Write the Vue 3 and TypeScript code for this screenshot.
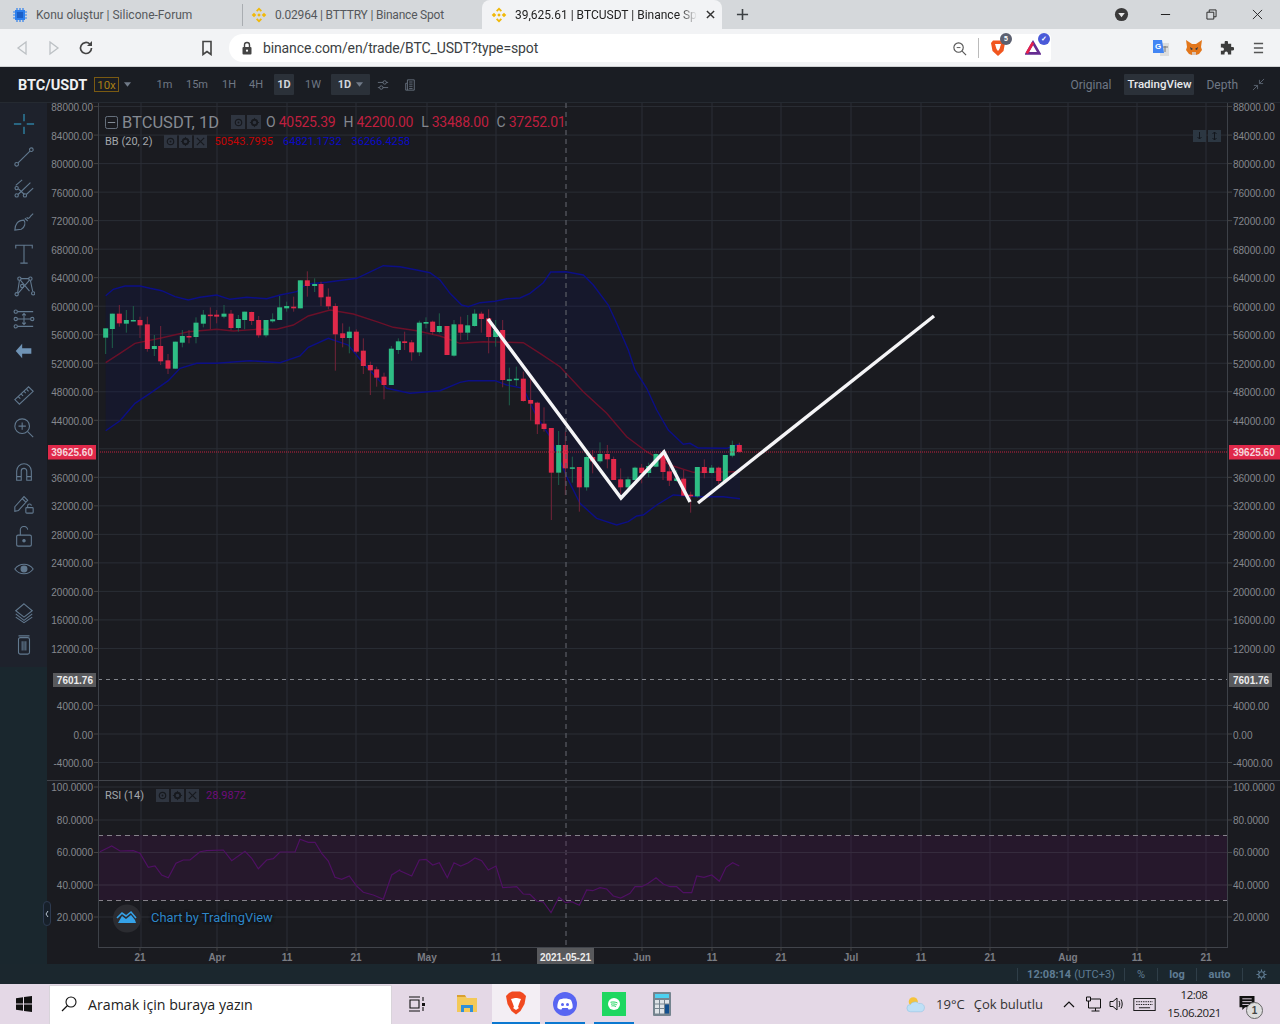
<script setup lang="ts">
type C = [number, string, number, number, number, number]
const a: C[] = [
[17,'g',205,233,205,282],[37,'g',161,207,161,264],[58,'r',161,190,135,200],[79,'g',180,191,150,218],[100,'g',180,184,138,184],[120,'r',180,196,170,234],[142,'r',193,267,170,275],[163,'g',258,267,225,288],[182,'r',258,304,198,315],[204,'r',301,326,282,342],[226,'g',245,326,245,326],[247,'g',228,248,210,262],[267,'r',228,231,210,250],[288,'g',188,231,172,250],[310,'g',164,191,150,202],[331,'r',164,168,142,208],[350,'r',164,170,150,190],[372,'g',161,170,135,175],[393,'r',161,204,150,210],[415,'g',177,204,165,215],[434,'g',155,180,155,208],[455,'r',156,183,155,195],[476,'r',180,226,168,233],[498,'g',180,226,180,232],[518,'g',178,184,160,188],[539,'g',142,180,108,180],[560,'g',138,145,125,155],[581,'r',140,145,110,155],[601,'g',61,145,61,145],[622,'r',61,78,34,110],[644,'g',72,78,55,96],[663,'r',72,112,65,138],[685,'r',110,139,85,148],[706,'r',138,223,130,332],[728,'r',220,234,190,262],[748,'g',215,234,200,280],[769,'r',215,275,208,280],[790,'r',272,318,235,342],[811,'r',315,331,305,405],[830,'r',328,353,320,380],[852,'r',350,375,338,418],[874,'g',266,375,258,375],[895,'g',244,270,235,282],[914,'r',244,249,215,270],[935,'r',247,277,240,302],[958,'g',188,277,182,288],[978,'g',186,191,172,205],[998,'r',185,216,182,225],[1018,'g',198,216,160,220]]
const b: C[] = [
[21,'r',198,285,198,285],[42,'g',193,287,180,290],[62,'r',193,218,170,240],[83,'g',196,218,165,240],[104,'g',161,198,148,200],[124,'r',161,177,155,218],[146,'r',175,231,148,280],[167,'g',210,231,180,260],[188,'r',210,360,180,382],[208,'g',358,362,323,436],[229,'g',356,360,320,378],[250,'r',356,423,335,425],[272,'r',420,431,355,482],[292,'r',428,493,425,522],[312,'r',491,507,442,515],[334,'r',504,638,504,780],[356,'g',555,638,513,675],[376,'r',555,625,515,705],[397,'g',622,625,590,668],[418,'r',621,682,621,755],[440,'g',591,682,570,692],[458,'r',591,604,570,640],[480,'g',582,604,547,610],[502,'r',582,598,555,625],[521,'r',597,660,590,660],[542,'r',658,682,625,702],[564,'g',658,682,650,695],[585,'g',623,660,620,660],[605,'r',623,639,612,670],[626,'g',618,639,608,652],[648,'g',582,620,580,622],[669,'r',582,636,570,660],[688,'r',634,662,605,678],[710,'g',655,663,630,665],[731,'r',656,707,630,708],[752,'r',704,709,695,758],[772,'g',621,709,621,712],[793,'r',621,639,598,655],[815,'g',623,639,615,640],[836,'r',623,663,620,672],[856,'g',585,663,585,665],[877,'g',555,587,542,592],[898,'r',555,576,548,578]]
const conv = (list: C[], ox: number) => list.map(c => ({
  x: ox + c[0] / 3, up: c[1] === 'g', top: 260 + c[2] / 3, h: Math.max(1.5, (c[3] - c[2]) / 3), wt: 260 + c[4] / 3, wb: 260 + c[5] / 3 }))
const candles = [...conv(a, 100), ...conv(b, 440)]

const pts = (z1: number[][], z2: number[][]) => [
  ...z1.map(p => [100 + p[0] / 3, 260 + p[1] / 3]),
  ...z2.map(p => [440 + p[0] / 3, 260 + p[1] / 3])]
const ps = (l: number[][]) => l.map(p => p[0].toFixed(1) + ',' + p[1].toFixed(1)).join(' ')
const upper = pts([[17,107],[40,88],[75,78],[120,78],[150,85],[185,92],[225,110],[265,120],[300,112],[350,105],[390,118],[440,112],[500,116],[540,105],[590,95],[620,72],[680,67],[770,55],[850,17],[900,20],[950,30],[990,38],[1020,60]],
  [[30,100],[65,135],[85,140],[120,128],[165,124],[200,116],[240,114],[270,100],[310,68],[332,36],[378,35],[430,45],[460,75],[505,135],[530,190],[565,270],[585,330],[620,385],[650,450],[685,510],[730,553],[750,550],[775,564],[860,565],[900,552]])
const lower = pts([[17,512],[60,482],[105,430],[150,400],[205,362],[240,325],[290,310],[350,310],[450,302],[540,308],[600,288],[625,262],[685,235],[745,255],[790,310],[860,385],[930,400],[1020,392]],
  [[60,367],[85,362],[165,362],[200,375],[250,385],[290,470],[330,530],[380,650],[420,730],[470,775],[530,795],[565,785],[590,768],[610,765],[650,735],[700,705],[780,710],[850,710],[900,716]])
const middle = pts([[17,308],[60,280],[105,250],[180,235],[265,215],[350,208],[400,213],[470,208],[530,208],[580,195],[625,168],[690,150],[760,162],[830,185],[880,202],[950,212],[1020,228]],
  [[60,250],[130,245],[250,248],[300,280],[360,320],[430,395],[500,460],[560,530],[620,575],[690,615],[760,637],[900,635]])
const upperS = ps(upper), lowerS = ps(lower), middleS = ps(middle)
const band = ps([...upper, ...[...lower].reverse()])

const rsi = ps([
  ...[[300,215],[335,198],[360,213],[400,212],[420,220],[445,262],[465,258],[485,285],[505,293],[528,250],[550,240],[570,240],[600,215],[620,212],[670,210],[695,242],[735,214],[755,235],[775,266],[800,240],[820,236],[840,216],[885,216],[900,178],[925,187],[945,187],[965,220],[985,243],[1005,292],[1025,298],[1048,288],[1070,318],[1090,337],[1120,345],[1150,358],[1175,285],[1199,270]].map(p => [p[0] / 3, 780 + p[1] / 3]),
  ...[[0,92],[35,108],[58,60],[78,58],[98,75],[118,68],[142,113],[162,68],[182,78],[205,68],[225,54],[245,62],[265,90],[288,78],[308,143],[350,140],[370,162],[390,163],[410,183],[430,186],[453,218],[477,172],[497,188],[515,185],[538,196],[560,150],[578,152],[600,143],[620,147],[640,168],[662,174],[690,160],[705,140],[725,140],[745,130],[768,113],[790,132],[810,140],[830,140],[850,158],[875,158],[890,108],[912,112],[935,105],[958,124],[978,82],[998,68],[1018,78]].map(p => [400 + p[0] / 3, 840 + p[1] / 3])])

const priceY = (p: number) => 734 - p * 0.00713
const grid: number[] = []
const prices: { y: number; ty: number; t: string }[] = []
for (let p = 88000; p >= -4000; p -= 4000) {
  if (p === 8000) continue
  grid.push(priceY(p))
  if (p !== 40000) prices.push({ y: priceY(p), ty: priceY(p) + 4.5, t: p.toFixed(2) })
}
const rsiTicks = [[100, 787], [80, 820], [60, 852.5], [40, 885], [20, 917]].map(r => ({ y: r[1], ty: r[1] + 3.5, t: r[0].toFixed(4) }))
const vlines = [141, 217, 287, 356, 427, 496, 642, 712, 781, 851, 921, 990, 1068, 1137, 1206]
const times = [
  { x: 140, t: '21' }, { x: 217, t: 'Apr' }, { x: 287, t: '11' }, { x: 356, t: '21' }, { x: 427, t: 'May' }, { x: 496, t: '11' },
  { x: 642, t: 'Jun' }, { x: 712, t: '11' }, { x: 781, t: '21' }, { x: 851, t: 'Jul' }, { x: 921, t: '11' }, { x: 990, t: '21' },
  { x: 1068, t: 'Aug' }, { x: 1137, t: '11' }, { x: 1206, t: '21' }]
const frames = ['1m', '15m', '1H', '4H', '1D', '1W']
</script>

<template>
  <div class="root">
    <!-- tab strip -->
    <div class="tabs">
      <div class="tab t1">
        <svg class="fav" viewBox="0 0 16 16"><path fill="#2f80ed" d="M3 3h10v10H3z"/><path stroke="#2f80ed" stroke-width="1.2" d="M5 1v14M8 1v14M11 1v14M1 5h14M1 8h14M1 11h14"/><rect x="5" y="5" width="6" height="6" fill="#1a5fc8"/></svg>
        <span>Konu oluştur | Silicone-Forum</span>
      </div>
      <div class="tab t2">
        <svg class="fav" viewBox="0 0 16 16"><path fill="#f0b90b" d="M8 .5l3 3-1.300 1.300L8 3.100 6.300 4.800 5 3.500zM3 5.700L5.300 8 3 10.300.7 8zM13 5.700L15.300 8 13 10.300 10.700 8zM8 12.900l1.700-1.700 1.300 1.300-3 3-3-3 1.300-1.300zM8 6.200L9.800 8 8 9.800 6.200 8z"/></svg>
        <span class="t2-txt">0.02964 | BTTTRY | Binance Spot</span>
      </div>
      <div class="tab t3">
        <svg class="fav" viewBox="0 0 16 16"><path fill="#f0b90b" d="M8 .5l3 3-1.300 1.300L8 3.100 6.300 4.800 5 3.500zM3 5.700L5.300 8 3 10.300.7 8zM13 5.700L15.300 8 13 10.300 10.700 8zM8 12.900l1.700-1.700 1.300 1.300-3 3-3-3 1.300-1.300zM8 6.200L9.800 8 8 9.800 6.200 8z"/></svg>
        <span class="t3-txt">39,625.61 | BTCUSDT | Binance Spot</span>
        <svg class="x" viewBox="0 0 10 10"><path d="M1 1l8 8M9 1l-8 8" stroke="#333" stroke-width="1.6"/></svg>
      </div>
      <svg class="plus" viewBox="0 0 14 14"><path d="M7 1v12M1 7h12" stroke="#3c4043" stroke-width="1.7"/></svg>
      <div class="grow"></div>
      <svg class="ctl drop" viewBox="0 0 16 16"><circle cx="8" cy="8" r="7" fill="#3a3a3a"/><path d="M4.500 6.500h7L8 11z" fill="#e8e8e8"/></svg>
      <svg class="ctl mn" viewBox="0 0 12 12"><path d="M1 6h10" stroke="#222" stroke-width="1.1"/></svg>
      <svg class="ctl mx" viewBox="0 0 12 12"><path d="M1 3.500h7.500V11H1zM3.500 3.500V1H11v7.500H8.500" fill="none" stroke="#222"/></svg>
      <svg class="ctl cl" viewBox="0 0 12 12"><path d="M1 1l10 10M11 1L1 11" stroke="#222" stroke-width="1"/></svg>
    </div>
    <!-- toolbar -->
    <div class="bar">
      <svg class="nav nb" viewBox="0 0 12 16"><path d="M10 2L2 8l8 6z" fill="none" stroke="#bcc0c4" stroke-width="1.3"/></svg>
      <svg class="nav nf" viewBox="0 0 12 16"><path d="M2 2l8 6-8 6z" fill="none" stroke="#bcc0c4" stroke-width="1.3"/></svg>
      <svg class="nav nr" viewBox="0 0 16 16"><path d="M13.500 8A5.500 5.500 0 1 1 11.800 4" fill="none" stroke="#444" stroke-width="1.7"/><path d="M14 1v5H9z" fill="#444"/></svg>
      <svg class="nav nbm" viewBox="0 0 12 16"><path d="M2 1.500h8v13l-4-3-4 3z" fill="none" stroke="#444" stroke-width="1.6"/></svg>
      <div class="omni">
        <svg class="lock" viewBox="0 0 12 14"><path d="M3.500 6V4a2.500 2.500 0 0 1 5 0v2" fill="none" stroke="#444" stroke-width="1.4"/><rect x="1.500" y="6" width="9" height="7.500" rx="1" fill="#444"/><circle cx="6" cy="9.700" r="1.100" fill="#fff"/></svg>
        <span class="url">binance.com/en/trade/BTC_USDT?type=spot</span>
        <div class="grow"></div>
        <svg class="zoomi" viewBox="0 0 16 16"><circle cx="7" cy="7" r="5" fill="none" stroke="#555" stroke-width="1.2"/><path d="M5 7h4" stroke="#555"/><path d="M10.800 10.800L15 15" stroke="#555" stroke-width="1.2"/></svg>
        <i class="sep"></i>
        <div class="ext e-brave">
          <svg viewBox="0 0 16 18"><path fill="#f1561f" d="M3 1.500h10l2 2.500-1.500 8L8 17 2.500 12 1 4z"/><path fill="#fff" d="M5 5h6l-1.500 5L8 12 6.500 10z"/></svg>
          <b class="bd b-s">5</b>
        </div>
        <div class="ext e-bat">
          <svg viewBox="0 0 18 16"><path d="M9 2L2 14h14z" fill="none" stroke="#662d91" stroke-width="3"/><path d="M9 2L2 14" stroke="#e8204a" stroke-width="3"/></svg>
          <b class="bd b-c">✓</b>
        </div>
      </div>
      <svg class="nav eg" viewBox="0 0 18 18"><path d="M8 4h9v13H8z" fill="#ddd"/><path d="M1 1h9l2 13H1z" fill="#4285f4"/><text x="3" y="10" class="gt">G</text><path d="M11 8h5M13 7v6" stroke="#777"/></svg>
      <svg class="nav ef" viewBox="0 0 18 18"><path d="M1 1l6 4h4l6-4-1 7 1 3-3 4-3 1H7l-3-1-3-4 1-3z" fill="#e2761b"/><path d="M5 8l3 2-2 1zM13 8l-3 2 2 1z" fill="#233447"/><path d="M7 13h4v3H7z" fill="#d7c1b3"/></svg>
      <svg class="nav ep" viewBox="0 0 16 16"><path fill="#3c3c3c" d="M6 1.500a1.800 1.800 0 0 1 3.600 0V3H13v3.400h1.500a1.800 1.800 0 0 1 0 3.600H13v4.500H9.500V13a1.800 1.800 0 0 0-3.600 0v1.500H2v-4h1.500a1.800 1.800 0 0 0 0-3.600H2V3h4z"/></svg>
      <svg class="nav em" viewBox="0 0 12 14"><path d="M1 2h10M1 7h10M1 12h10" stroke="#555" stroke-width="1.6"/></svg>
    </div>
    <!-- binance header -->
    <header class="hd">
      <strong class="pair">BTC/USDT</strong>
      <span class="lev">10x</span>
      <svg class="caret cg" viewBox="0 0 8 5"><path d="M0 0h8L4 5z"/></svg>
      <div class="frames">
        <span v-for="f in frames" :key="f" class="fr" :class="{ on: f === '1D' }">{{ f }}</span>
        <span class="fr sel">1D <svg class="caret" viewBox="0 0 8 5"><path d="M0 0h8L4 5z"/></svg></span>
      </div>
      <svg class="hi h1" viewBox="0 0 14 12"><path d="M1 3h12M1 9h12" stroke="#6c7684"/><circle cx="9" cy="3" r="2" fill="#1a1d23" stroke="#6c7684"/><circle cx="5" cy="9" r="2" fill="#1a1d23" stroke="#6c7684"/></svg>
      <svg class="hi h2" viewBox="0 0 12 14"><path d="M3 1h8v12H1V5h2zM3 5v8M5 3.500h4M5 6h4M5 8.500h4M5 11h4" fill="none" stroke="#6c7684"/></svg>
      <div class="grow"></div>
      <span class="view v1">Original</span>
      <span class="view von">TradingView</span>
      <span class="view v3">Depth</span>
      <svg class="hi h3" viewBox="0 0 14 14"><path d="M1 13l5-5M2 8h4v4M13 1L8 6M12 6H8V2" fill="none" stroke="#5c6672"/></svg>
    </header>
    <!-- main -->
    <div class="main">
      <aside class="side">
        <div class="tools">
          <div class="tool"><svg viewBox="0 0 24 24"><path d="M1 12h8M15 12h8M12 1v8M12 15v8" stroke="#2e7d9e" stroke-width="1.6"/></svg></div>
          <div class="tool"><svg viewBox="0 0 24 24"><circle cx="4" cy="20" r="2"/><circle cx="20" cy="4" r="2"/><path d="M5.500 18.500l13-13"/></svg></div>
          <div class="tool"><svg viewBox="0 0 24 24"><circle cx="4" cy="19" r="1.800"/><circle cx="13" cy="19" r="1.800"/><circle cx="4" cy="11" r="1.800"/><path d="M5.500 18L19 5M3 8l7-6M14.500 18L22 11M6 12l6.500 6"/></svg></div>
          <div class="tool"><svg viewBox="0 0 24 24"><path d="M2 22c0-6 3-11 10-11 2 3 1 8-3 10zM13 9l3 3M15 8c1 2 3 1 4-1l3-3"/></svg></div>
          <div class="tool"><svg viewBox="0 0 24 24"><path d="M3 6V2.500h18V6M12 2.500V22M8 22h8"/></svg></div>
          <div class="tool"><svg viewBox="0 0 24 24"><circle cx="4" cy="21" r="1.800"/><circle cx="7" cy="4" r="1.800"/><circle cx="19" cy="4" r="1.800"/><circle cx="22" cy="20" r="1.800"/><circle cx="10" cy="12" r="1.800"/><path d="M5 19.500L7 6M5.500 20L18 5.500M8 5.500l10 12M19 6l2.500 12M8.500 4h9"/></svg></div>
          <div class="tool"><svg viewBox="0 0 24 24"><circle cx="3" cy="4" r="1.800"/><circle cx="3" cy="12" r="1.800"/><circle cx="21" cy="12" r="1.800"/><circle cx="3" cy="20" r="1.800"/><path d="M5 4h17M5 20h17M5 12h14M12 6v12M10 8l2-2 2 2M10 16l2 2 2-2"/></svg></div>
          <div class="tool"><svg viewBox="0 0 24 24"><path d="M10 4l-7 8 7 8v-5h10V9H10z" fill="#6f93b5" stroke="none"/></svg></div>
          <div class="tool g2"><svg viewBox="0 0 24 24"><path d="M2 17L17 3l5 5L7 22zM6 14l2 2M9 11l2 2M12 8l2 2M15 6l2 2"/></svg></div>
          <div class="tool"><svg viewBox="0 0 24 24"><circle cx="10" cy="10" r="8"/><path d="M10 6v8M6 10h8M16 16l6 6"/></svg></div>
          <div class="tool g2"><svg viewBox="0 0 24 24"><path d="M4 21V11a8 8 0 0 1 16 0v10h-5V11a3 3 0 0 0-6 0v10zM4 17h5M15 17h5"/></svg></div>
          <div class="tool"><svg viewBox="0 0 24 24"><path d="M2 15L12 4l4 4L6 19l-4 1zM10 6l4 4"/><rect x="14" y="16" width="8" height="6" rx="1"/><path d="M16 16v-2a2 2 0 0 1 4 0"/></svg></div>
          <div class="tool"><svg viewBox="0 0 24 24"><rect x="4" y="10" width="16" height="12" rx="1.500"/><path d="M8 10V5a4 4 0 0 1 8-1"/><circle cx="12" cy="16" r="1.300" fill="#62798f"/></svg></div>
          <div class="tool"><svg viewBox="0 0 24 24"><path d="M2 12c5-7 15-7 20 0-5 7-15 7-20 0z"/><circle cx="12" cy="12" r="3.200" fill="#62798f"/></svg></div>
          <div class="tool g3"><svg viewBox="0 0 24 24"><path d="M12 2l9 7.500-9 7-9-7zM3 13l9 7 9-7M3 16.500l9 6 9-6"/></svg></div>
          <div class="tool"><svg viewBox="0 0 24 24"><rect x="6" y="4" width="12" height="18" rx="2"/><path d="M6 2h12M10 8v10M12 8v10M14 8v10"/></svg></div>
        </div>
        <div class="handle"><svg viewBox="0 0 6 10"><path d="M4 2L2 5l2 3" fill="none" stroke="#b8c4d0"/></svg></div>
      </aside>
      <div class="chart">
        <svg class="plot" viewBox="47 103 1233 861" width="1233" height="861">
          <rect x="47" y="103" width="1233" height="861" fill="#1a1b20"/>
          <!-- grid -->
          <line v-for="v in vlines" :key="'v'+v" :x1="v" :x2="v" y1="103" y2="947" stroke="#2a2e37"/>
          <line v-for="g in grid" :key="'h'+g" x1="98" x2="1227" :y1="g" :y2="g" stroke="#2a2e35"/>
          <line v-for="r in rsiTicks" :key="'r'+r.t" x1="98" x2="1227" :y1="r.y" :y2="r.y" stroke="#2a2e35"/>
          <!-- bollinger -->
          <polygon :points="band" fill="#0a1060" fill-opacity=".2"/>
          <polyline :points="upperS" fill="none" stroke="#0c0f86" stroke-width="1.400"/>
          <polyline :points="lowerS" fill="none" stroke="#0c0f86" stroke-width="1.400"/>
          <polyline :points="middleS" fill="none" stroke="#6b1029" stroke-width="1.400"/>
          <!-- candles -->
          <g v-for="(c, i) in candles" :key="i">
            <line :x1="c.x" :x2="c.x" :y1="c.wt" :y2="c.wb" :stroke="c.up ? '#1f5f4a' : '#742339'"/>
            <rect :x="c.x - 2.500" :y="c.top" width="5" :height="c.h" :fill="c.up ? '#2ebd85' : '#e0294a'"/>
          </g>
          <!-- crosshair + last price -->
          <line x1="98" x2="1227" y1="452" y2="452" stroke="#c0223f" stroke-dasharray="1 1"/>
          <line x1="98" x2="1227" y1="679.500" y2="679.500" stroke="#80838a" stroke-dasharray="4 4"/>
          <line x1="566" x2="566" y1="103" y2="947" stroke="#5b5e66" stroke-width="1.200" stroke-dasharray="5 4"/>
          <!-- hand-drawn lines -->
          <polyline points="488,319 621,498 664,452 690,502" fill="none" stroke="#f5f5f7" stroke-width="3.400"/>
          <line x1="698" y1="503" x2="934" y2="316" stroke="#f5f5f7" stroke-width="3.400"/>
          <!-- rsi -->
          <rect x="98" y="835" width="1129" height="65" fill="#4a0f4e" fill-opacity=".25"/>
          <line v-for="r in rsiTicks.slice(2,4)" :key="'rr'+r.t" x1="98" x2="1227" :y1="r.y" :y2="r.y" stroke="#352b3d"/>
          <line x1="98" x2="1227" y1="835.500" y2="835.500" stroke="#85828a" stroke-dasharray="5 4"/>
          <line x1="98" x2="1227" y1="900.500" y2="900.500" stroke="#85828a" stroke-dasharray="5 4"/>
          <polyline :points="rsi" fill="none" stroke="#4f1063" stroke-width="1.200"/>
          <!-- frames -->
          <rect x="47" y="103" width="51" height="844" fill="#1a1b20"/>
          <rect x="1228" y="103" width="52" height="844" fill="#1a1b20"/>
          <rect x="47" y="948" width="1233" height="16" fill="#1a1b20"/>
          <line x1="98.500" x2="98.500" y1="103" y2="947" stroke="#3d4148"/>
          <line x1="1227.500" x2="1227.500" y1="103" y2="947" stroke="#3d4148"/>
          <line x1="47" x2="1280" y1="780.500" y2="780.500" stroke="#41444b"/>
          <line x1="98" x2="1228" y1="947.500" y2="947.500" stroke="#41444b"/>
          <!-- axes -->
          <g v-for="p in [...prices, ...rsiTicks]" :key="'l'+p.t">
            <line x1="94" x2="98" :y1="p.y" :y2="p.y" stroke="#444"/>
            <line x1="1228" x2="1232" :y1="p.y" :y2="p.y" stroke="#444"/>
            <text x="93" :y="p.ty" text-anchor="end" class="ax">{{ p.t }}</text>
            <text x="1233" :y="p.ty" class="ax">{{ p.t }}</text>
          </g>
          <g v-for="t in times" :key="'t'+t.x+t.t">
            <line :x1="t.x" :x2="t.x" y1="947" y2="951" stroke="#444"/>
            <text :x="t.x" y="961" text-anchor="middle" class="tm">{{ t.t }}</text>
          </g>
          <rect x="48" y="445" width="48" height="14.500" fill="#e0294a"/>
          <text x="93" y="456" text-anchor="end" class="tagw">39625.60</text>
          <rect x="1229" y="445" width="51" height="14.500" fill="#e0294a"/>
          <text x="1233" y="456" class="tagw">39625.60</text>
          <rect x="53" y="673" width="43" height="14" fill="#58595c"/>
          <text x="93" y="684" text-anchor="end" class="tagb">7601.76</text>
          <rect x="1229" y="673" width="43" height="14" fill="#58595c"/>
          <text x="1233" y="684" class="tagb">7601.76</text>
          <rect x="537" y="948" width="57" height="16" fill="#58595c"/>
          <text x="565.500" y="961" text-anchor="middle" class="tagb">2021-05-21</text>
          <!-- right corner buttons -->
          <rect x="1193" y="130" width="13" height="12" fill="#2c3742"/>
          <rect x="1208" y="130" width="13" height="12" fill="#2c3742"/>
          <path d="M1199.500 132v7M1197.500 137l2 2 2-2" fill="none" stroke="#12161c"/>
          <path d="M1214.500 132v8M1212.500 134l2-2 2 2M1212.500 138l2 2 2-2" fill="none" stroke="#12161c"/>
          <!-- logo -->
          <circle cx="127" cy="918.500" r="14" fill="#2b2c31"/>
          <path d="M118 923l4-7 4 3 5-4 4 5 1 3z" fill="#35a2e8"/>
          <path d="M117 918l5-5 4 3 5-4 5 6" fill="none" stroke="#35a2e8" stroke-width="1.600"/>
        </svg>
        <!-- legends over the plot -->
        <div class="lg lg1">
          <svg class="lgi" viewBox="0 0 14 14"><rect x=".5" y=".5" width="13" height="13" rx="2" fill="none" stroke="#6f7a88"/><path d="M3 7h8" stroke="#8a94a0"/></svg>
          <span class="lname">BTCUSDT, 1D</span>
          <span class="bx"><svg viewBox="0 0 12 12"><circle cx="6" cy="6" r="3.500" fill="none" stroke="#17191e" stroke-width="1.300"/><circle cx="6" cy="6" r="1" fill="#17191e"/></svg></span>
          <span class="bx"><svg viewBox="0 0 12 12"><circle cx="6" cy="6" r="3" fill="none" stroke="#17191e" stroke-width="2" /><path d="M6 1v2M6 9v2M1 6h2M9 6h2" stroke="#17191e"/></svg></span>
          <span class="ohl"><em class="k k0">O</em><em class="v">40525.39</em><em class="k">H</em><em class="v">42200.00</em><em class="k">L</em><em class="v">33488.00</em><em class="k">C</em><em class="v">37252.01</em></span>
        </div>
        <div class="lg lg2">
          <span class="sm">BB (20, 2)</span>
          <span class="bxs first"><svg viewBox="0 0 12 12"><circle cx="6" cy="6" r="3.500" fill="none" stroke="#17191e" stroke-width="1.300"/><circle cx="6" cy="6" r="1" fill="#17191e"/></svg></span>
          <span class="bxs"><svg viewBox="0 0 12 12"><circle cx="6" cy="6" r="3" fill="none" stroke="#17191e" stroke-width="2"/><path d="M6 1v2M6 9v2M1 6h2M9 6h2" stroke="#17191e"/></svg></span>
          <span class="bxs"><svg viewBox="0 0 12 12"><path d="M2 2l8 8M10 2l-8 8" stroke="#17191e" stroke-width="1.300"/></svg></span>
          <span class="vr">50543.7995</span><span class="vb">64821.1732</span><span class="vb">36266.4258</span>
        </div>
        <div class="lg lg3">
          <span class="sm">RSI (14)</span>
          <span class="bxs first rs"><svg viewBox="0 0 12 12"><circle cx="6" cy="6" r="3.500" fill="none" stroke="#17191e" stroke-width="1.300"/><circle cx="6" cy="6" r="1" fill="#17191e"/></svg></span>
          <span class="bxs"><svg viewBox="0 0 12 12"><circle cx="6" cy="6" r="3" fill="none" stroke="#17191e" stroke-width="2"/><path d="M6 1v2M6 9v2M1 6h2M9 6h2" stroke="#17191e"/></svg></span>
          <span class="bxs"><svg viewBox="0 0 12 12"><path d="M2 2l8 8M10 2l-8 8" stroke="#17191e" stroke-width="1.300"/></svg></span>
          <span class="vp">28.9872</span>
        </div>
        <div class="tvtxt">Chart by TradingView</div>
      </div>
    </div>
    <!-- footer -->
    <footer class="ft">
      <span class="fc fclock"><b>12:08:14</b> (UTC+3)</span>
      <span class="fc fpc">%</span>
      <span class="fc flog"><b>log</b></span>
      <span class="fc fauto"><b>auto</b></span>
      <span class="fc fgear"><svg viewBox="0 0 12 12"><circle cx="6" cy="6" r="3" fill="none" stroke="#5f7c93" stroke-width="1.300"/><path d="M6 .5v2M6 9.500v2M.5 6h2M9.500 6h2M2 2l1.500 1.500M8.500 8.500L10 10M2 10l1.500-1.500M8.500 3.500L10 2" stroke="#5f7c93" stroke-width="1.200"/></svg></span>
    </footer>
    <!-- taskbar -->
    <div class="task">
      <svg class="win" viewBox="0 0 16 16"><path fill="#111" d="M0 2.200l7-1v6.300H0zM8 1.100L16 0v7.500H8zM0 8.500h7v6.300l-7-1zM8 8.500h8V16l-8-1.100z"/></svg>
      <div class="search">
        <svg class="sico" viewBox="0 0 16 16"><circle cx="10" cy="6" r="5" fill="none" stroke="#111" stroke-width="1.100"/><path d="M6.500 9.500L1 15" stroke="#111" stroke-width="1.300"/></svg>
        <span>Aramak için buraya yazın</span>
      </div>
      <div class="tk tv"><svg viewBox="0 0 16 16"><path d="M0 1h11M0 15h11M1 4h9v8H1zM14 1v4M14 11v4" fill="none" stroke="#111" stroke-width="1.100"/><rect x="13" y="7" width="3" height="3" fill="#111"/></svg></div>
      <div class="tk fo"><svg viewBox="0 0 22 20"><path d="M1 2h8l2 2h10v14H1z" fill="#f3c959"/><path d="M1 1h8l1 2H1z" fill="#d9a030"/><path d="M5 18v-7h12v7h-3v-4H8v4z" fill="#2f8fd8"/></svg></div>
      <div class="tk act"><svg viewBox="0 0 20 24"><path fill="#f1491f" d="M3 2l3-1.500h8L17 2l3 3-1.500 8-4 7L10 23.500 5.500 20l-4-7L0 5z"/><path fill="#fff" d="M5 8l4-1h2l4 1-2 5-1 3 1 1-3 2-3-2 1-1-1-3z"/></svg></div>
      <div class="tk und"><svg viewBox="0 0 24 24"><circle cx="12" cy="12" r="12" fill="#5865f2"/><path fill="#fff" d="M6 8c3-2 9-2 12 0 1.500 3 2 6 1.500 8-1.500 1-2.500 1.500-4 1.500l-.8-1.500H9.300l-.8 1.500c-1.500 0-2.500-.5-4-1.500C4 14 4.500 11 6 8z"/><circle cx="9.500" cy="12.500" r="1.500" fill="#5865f2"/><circle cx="14.500" cy="12.500" r="1.500" fill="#5865f2"/></svg></div>
      <div class="tk und"><svg viewBox="0 0 24 24"><rect width="24" height="24" fill="#1ed760"/><circle cx="12" cy="12" r="6" fill="#fff"/><path d="M8.500 10.300c2-.6 5-.4 7 .7M9 12.200c1.800-.5 4-.3 5.800.6M9.500 14c1.500-.4 3.200-.2 4.500.5" fill="none" stroke="#1ed760" stroke-width="1"/></svg></div>
      <div class="tk calc"><svg viewBox="0 0 18 24"><rect width="18" height="24" rx="1" fill="#75848f"/><rect x="2" y="2" width="14" height="4" fill="#4dd0f0"/><path d="M2 8h4v3.500H2zM7 8h4v3.500H7zM12 8h4v3.500h-4zM2 12.500h4V16H2zM7 12.500h4V16H7zM2 17h4v4.500H2zM7 17h4v4.500H7z" fill="#dfe4e8"/><path d="M12 12.500h4v9h-4z" fill="#12508f"/></svg></div>
      <div class="grow"></div>
      <div class="wx">
        <svg viewBox="0 0 22 18"><circle cx="8" cy="6" r="5" fill="#f5c33b"/><path d="M5 17a4 4 0 0 1 0-8c1-3 7-4 9-1 5-1 7 3 6 6-.5 2-2 3-4 3z" fill="#bfe0f6" stroke="#8cc3e6" stroke-width=".6"/></svg>
        <span class="temp">19°C</span><span class="wt">Çok bulutlu</span>
      </div>
      <svg class="tr t-up" viewBox="0 0 12 8"><path d="M1 7l5-5 5 5" fill="none" stroke="#111" stroke-width="1.200"/></svg>
      <svg class="tr t-net" viewBox="0 0 16 16"><path d="M1 1h4v4H1zM3 5v7M5 3h10v9H3M6 15h8M10 12v3" fill="none" stroke="#111"/></svg>
      <svg class="tr t-vol" viewBox="0 0 16 16"><path d="M1 5.500h3L8 2v12L4 10.500H1zM10 5c1 2 1 4 0 6M12 3.500c1.600 3 1.600 6 0 9" fill="none" stroke="#111"/></svg>
      <svg class="tr t-key" viewBox="0 0 24 14"><rect x=".5" y=".5" width="23" height="13" fill="none" stroke="#111"/><path d="M3 4h18M3 7h18" stroke="#111" stroke-dasharray="1.500 1"/><path d="M6 10.500h12" stroke="#111"/></svg>
      <div class="clock"><span>12:08</span><span>15.06.2021</span></div>
      <div class="note">
        <svg viewBox="0 0 16 16"><path d="M0 0h16v12H6l-3 3v-3H0z" fill="#111"/><path d="M3 3h10M3 6h10M3 9h7" stroke="#e4d8e6"/></svg>
        <b>1</b>
      </div>
    </div>
  </div>
</template>

<style scoped>
.root { width: 1280px; height: 1024px; display: flex; flex-direction: column; overflow: hidden; font-family: "Roboto", "Liberation Sans", sans-serif; background: #1a1b20; }
.grow { flex: 1; }
svg { display: block; flex: none; }

.tabs { height: 29px; background: #d5d8db; display: flex; align-items: stretch; font-size: 12px; color: #55585c; flex: none; }
.tab { display: flex; align-items: center; position: relative; white-space: nowrap; overflow: hidden; }
.fav { width: 16px; height: 16px; }
.t1 { width: 243px; padding-left: 12px; gap: 8px; border-right: 1px solid #a9adb1; box-sizing: border-box; height: 22px; margin-top: 4px; }
.t2 { width: 239px; padding-left: 8px; gap: 8px; box-sizing: border-box; }
.t2-txt { letter-spacing: -.2px; }
.t3 { width: 240px; padding-left: 9px; gap: 8px; box-sizing: border-box; background: #f2f3f5; color: #222; border-radius: 8px 8px 0 0; }
.t3-txt { width: 182px; overflow: hidden; -webkit-mask-image: linear-gradient(90deg, #000 165px, transparent 182px); mask-image: linear-gradient(90deg, #000 165px, transparent 182px); }
.x { width: 9px; height: 9px; margin-left: 1px; }
.plus { width: 13px; height: 13px; align-self: center; margin-left: 14px; }
.ctl { align-self: center; }
.drop { width: 15px; height: 15px; margin-right: 31px; }
.mn { width: 11px; height: 11px; margin-right: 35px; }
.mx { width: 11px; height: 11px; margin-right: 35px; }
.cl { width: 11px; height: 11px; margin-right: 17px; }

.bar { height: 38px; box-sizing: border-box; background: #f2f3f5; border-bottom: 1px solid #cfd1d3; display: flex; align-items: center; position: relative; flex: none; padding-top: 1px; }
.nav { height: 16px; width: 14px; }
.nb { margin-left: 15px; }
.nf { margin-left: 18px; }
.nr { margin-left: 17px; width: 16px; }
.nbm { margin-left: 107px; width: 12px; }
.omni { margin-left: 16px; width: 822px; height: 28px; background: #fff; display: flex; align-items: center; font-size: 14px; color: #3c3f43; position: relative; border-radius: 14px 4px 4px 14px; }
.lock { width: 12px; height: 14px; margin-left: 12px; }
.url { margin-left: 10px; letter-spacing: -.13px; }
.zoomi { width: 15px; height: 15px; margin-right: 11px; }
.sep { width: 1px; height: 20px; background: #bbb; margin-right: 11px; }
.ext { position: relative; width: 18px; height: 18px; }
.ext svg { width: 16px; height: 18px; }
.e-brave { margin-right: 17px; }
.e-bat { margin-right: 8px; }
.bd { position: absolute; width: 12px; height: 12px; border-radius: 50%; top: -6px; left: 10px; color: #fff; font: 700 7px/12px "Liberation Sans", sans-serif; text-align: center; }
.b-s { background: #5c6070; }
.b-c { background: #4a5ad8; left: 13px; }
.gt { font: 700 8px "Liberation Sans", sans-serif; fill: #fff; }
.eg { margin-left: 101px; width: 18px; height: 18px; }
.ef { margin-left: 15px; width: 18px; height: 18px; }
.ep { margin-left: 16px; width: 15px; height: 15px; }
.em { margin-left: 19px; width: 11px; height: 14px; }

.hd { height: 36px; flex: none; box-sizing: border-box; background: #1a1d23; border-bottom: 1px solid #252a31; display: flex; align-items: center; color: #6f7885; font-size: 12px; }
.pair { margin-left: 18px; margin-top: 1px; color: #f0f1f2; font-size: 14.500px; font-weight: 700; width: 69px; white-space: nowrap; }
.lev { margin-left: 7px; width: 25px; height: 15px; line-height: 14px; box-sizing: border-box; border: 1px solid #7a5a12; color: #a87f14; text-align: center; font-size: 11.500px; }
.caret { width: 7px; height: 5px; fill: #707a88; display: inline-block; }
.cg { margin-left: 5px; }
.frames { display: flex; align-items: center; margin-left: 26px; height: 21px; }
.fr { display: flex; align-items: center; justify-content: center; flex: none; height: 21px; font-size: 11px; gap: 5px; white-space: nowrap; }
.fr:nth-child(1) { width: 15px; margin-right: 14px; }
.fr:nth-child(2) { width: 22px; margin-right: 14px; }
.fr:nth-child(3) { width: 14px; margin-right: 13px; }
.fr:nth-child(4) { width: 14px; margin-right: 11px; }
.fr:nth-child(5) { width: 20px; margin-right: 11px; }
.fr:nth-child(6) { width: 16px; margin-right: 10px; }
.fr:nth-child(7) { width: 39px; }
.fr.on, .fr.sel { background: #2b3139; color: #d0d4da; font-weight: 700; border-radius: 1px; }
.hi { width: 12px; height: 12px; }
.h1 { margin-left: 7px; }
.h2 { margin-left: 15px; }
.view { font-size: 12px; white-space: nowrap; }
.von { background: #2b3139; color: #e8eaed; font-weight: 500; font-size: 11.500px; height: 21px; line-height: 21px; width: 70px; text-align: center; margin: 0 12px 0 13px; border-radius: 1px; }
.h3 { margin: 0 15px 0 14px; width: 13px; height: 13px; }

.main { height: 861px; flex: none; display: flex; }
.side { width: 47px; flex: none; background: #1a272e; position: relative; }
.tools { height: 564px; background: #1e222c; box-sizing: border-box; padding-top: 5px; }
.tool { height: 32.400px; display: flex; align-items: center; justify-content: center; }
.tool svg { width: 22px; height: 22px; fill: none; stroke: #62798f; stroke-width: 1.200; }
.g2 { margin-top: 12px; }
.g3 { margin-top: 11px; }
.handle { position: absolute; left: 43px; top: 798px; width: 8px; height: 25px; box-sizing: border-box; background: #17202a; border: 1px solid #2d3a50; border-radius: 4px; display: flex; align-items: center; justify-content: center; z-index: 2; }
.handle svg { width: 6px; height: 10px; }

.chart { position: relative; flex: 1; height: 861px; overflow: hidden; }
.plot { position: absolute; left: 0; top: 0; }
.ax { font: 10px "Liberation Sans", sans-serif; fill: #85888e; }
.tm { font: 700 10px "Liberation Sans", sans-serif; fill: #7a7d84; }
.tagw { font: 700 10px "Liberation Sans", sans-serif; fill: #f6d5dc; }
.tagb { font: 700 10px "Liberation Sans", sans-serif; fill: #ececec; }

.lg { position: absolute; display: flex; align-items: center; white-space: nowrap; }
.lg1 { left: 58px; top: 10px; height: 18px; }
.lgi { width: 13px; height: 13px; }
.lname { margin-left: 4px; font-size: 16.500px; color: #858a92; width: 107px; }
.bx { width: 14px; height: 14px; background: #2f3540; margin-left: 2px; display: flex; align-items: center; justify-content: center; }
.bx svg, .bxs svg { width: 11px; height: 11px; }
.ohl { display: flex; margin-left: 5px; font-size: 14px; }
.ohl em { font-style: normal; }
.k { color: #83878f; margin-left: 8px; margin-right: 3px; }
.k0 { margin-left: 0; }
.v { color: #bf1f3f; letter-spacing: -.25px; }
.lg2 { left: 58px; top: 31px; height: 14px; font-size: 11px; }
.sm { color: #a3a6ab; }
.bxs { width: 13px; height: 13px; background: #2f3540; margin-left: 2px; display: flex; align-items: center; justify-content: center; }
.first { margin-left: 12px; }
.vr { color: #c40505; margin-left: 7px; }
.vb { color: #0a0ac4; margin-left: 10px; }
.lg3 { left: 58px; top: 685px; height: 14px; font-size: 11px; }
.vp { color: #6e0c7a; margin-left: 7px; }
.tvtxt { position: absolute; left: 104px; top: 807px; font-size: 12.900px; color: #2e86c8; text-shadow: 0 0 3px #0c0d10, 0 0 3px #0c0d10; }

.ft { height: 20px; flex: none; background: #1b272e; display: flex; justify-content: flex-end; align-items: center; font-size: 11px; color: #5f7c93; }
.fc { height: 13px; line-height: 13px; border-left: 1px solid #2f3e48; text-align: center; box-sizing: border-box; display: flex; justify-content: center; align-items: center; gap: 3px; }
.fclock { width: 107px; }
.fpc { width: 33px; }
.flog { width: 39px; }
.fauto { width: 46px; }
.fgear { width: 38px; }
.fgear svg { width: 11px; height: 11px; }

.task { height: 40px; flex: none; background: #e4d8e6; display: flex; align-items: center; color: #222; font-family: "Open Sans", "Noto Sans", sans-serif; }
.win { width: 16px; height: 16px; margin-left: 16px; }
.search { margin-left: 17px; width: 343px; height: 39px; margin-top: 1px; box-sizing: border-box; background: #fff; border: 1px solid #d8d4da; border-bottom: 0; display: flex; align-items: center; font-size: 14.200px; color: #222; padding-bottom: 2px; }
.sico { width: 16px; height: 16px; margin-left: 11px; margin-right: 11px; }
.tk { height: 40px; display: flex; align-items: center; justify-content: center; box-sizing: border-box; }
.tv { width: 48px; margin-left: 1px; }
.tv svg { width: 16px; height: 16px; }
.fo { width: 51px; }
.fo svg { width: 22px; height: 20px; }
.act { width: 48px; background: #f3eef4; border-bottom: 2px solid #0b78d0; }
.act svg { width: 20px; height: 24px; }
.und { width: 40px; margin-left: 5px; margin-right: 4px; border-bottom: 2px solid #0b78d0; padding-top: 2px; }
.und svg { width: 24px; height: 24px; }
.calc { width: 40px; margin-left: 4px; }
.calc svg { width: 18px; height: 24px; }
.wx { display: flex; align-items: center; font-size: 13px; color: #333; }
.wx svg { width: 20px; height: 17px; margin-right: 10px; }
.temp { margin-right: 9px; }
.wt { margin-right: 20px; }
.tr { margin-right: 8px; }
.t-up { width: 12px; height: 8px; margin-right: 10px; }
.t-net { width: 17px; height: 16px; margin-right: 7px; }
.t-vol { width: 16px; height: 16px; margin-right: 8px; }
.t-key { width: 23px; height: 13px; margin-right: 10px; }
.clock { width: 56px; display: flex; flex-direction: column; align-items: center; font-size: 11.500px; letter-spacing: -.5px; line-height: 18px; margin-right: 17px; color: #222; }
.note { position: relative; width: 16px; height: 16px; margin-right: 25px; }
.note svg { width: 16px; height: 15px; }
.note b { position: absolute; left: 7px; top: 6px; width: 15px; height: 15px; border: 1px solid #666; border-radius: 50%; background: #ddd; font: 700 10px/15px "Liberation Sans", sans-serif; color: #444; text-align: center; }
</style>

<style>
html, body { margin: 0; background: #1a1b20; }
</style>
